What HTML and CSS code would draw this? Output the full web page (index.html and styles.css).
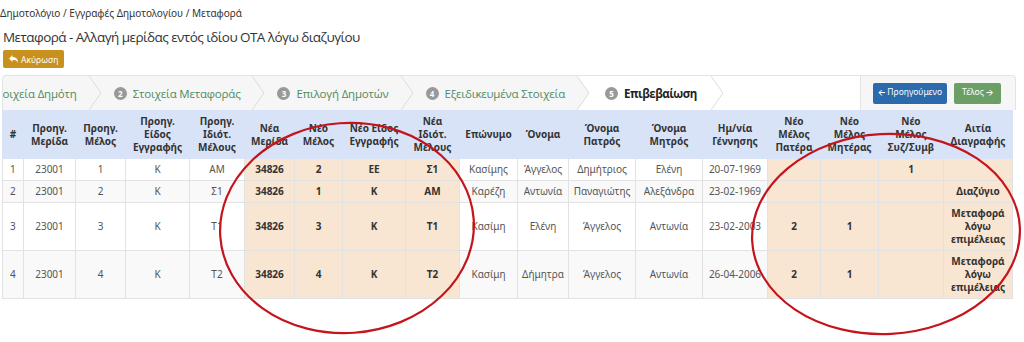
FILE: index.html
```html
<!DOCTYPE html>
<html lang="el">
<head>
<meta charset="UTF-8">
<meta name="viewport" content="width=device-width, initial-scale=1.0">
<title>Μεταφορά</title>
<link rel="stylesheet" href="styles.css">
</head>
<body>
  <div class="page">
    <div class="breadcrumb">Δημοτολόγιο / Εγγραφές Δημοτολογίου / Μεταφορά</div>
    <h1 class="title">Μεταφορά - Αλλαγή μερίδας εντός ιδίου ΟΤΑ λόγω διαζυγίου</h1>
    <button class="btn-cancel">
      <svg width="9" height="8" viewBox="0 0 9 8"><path d="M0 3.5 L3.5 0 V2 C7 2 9 4 9 8 C8 5.5 6.5 5 3.5 5 V7 Z" fill="#fff"/></svg>
      Ακύρωση
    </button>

    <div class="wizard">
      <div class="steps">
        <div class="step first"><span class="num">1</span>Στοιχεία Δημότη</div>
        <svg class="chev" width="12" height="34" viewBox="0 0 12 34"><polyline points="0,0 12,17 0,34" fill="none" stroke="#dcdcdc"/></svg>
        <div class="step"><span class="num">2</span>Στοιχεία Μεταφοράς</div>
        <svg class="chev" width="12" height="34" viewBox="0 0 12 34"><polyline points="0,0 12,17 0,34" fill="none" stroke="#dcdcdc"/></svg>
        <div class="step"><span class="num">3</span>Επιλογή Δημοτών</div>
        <svg class="chev" width="12" height="34" viewBox="0 0 12 34"><polyline points="0,0 12,17 0,34" fill="none" stroke="#dcdcdc"/></svg>
        <div class="step"><span class="num">4</span>Εξειδικευμένα Στοιχεία</div>
        <svg class="chev to-active" width="12" height="34" viewBox="0 0 12 34"><path d="M0 0 L12 17 L0 34 Z" fill="#f6f6f6"/><polyline points="0,0 12,17 0,34" fill="none" stroke="#dcdcdc"/></svg>
        <div class="step active"><span class="num">5</span>Επιβεβαίωση</div>
        <svg class="chev" width="12" height="34" viewBox="0 0 12 34"><polyline points="0,0 12,17 0,34" fill="none" stroke="#dcdcdc"/></svg>
        <div class="spacer"></div>
      </div>
      <div class="actions">
        <button class="btn btn-prev">&#129128; Προηγούμενο</button>
        <button class="btn btn-next">Τέλος &#129130;</button>
      </div>
    </div>

    <table class="grid">
      <colgroup>
        <col style="width:21px"><col style="width:52px"><col style="width:50px"><col style="width:64px">
        <col style="width:55px"><col style="width:50px"><col style="width:48px"><col style="width:63px">
        <col style="width:54px"><col style="width:58px"><col style="width:51px"><col style="width:67px">
        <col style="width:67px"><col style="width:65px"><col style="width:53px"><col style="width:58px">
        <col style="width:65px"><col style="width:69px">
      </colgroup>
      <thead>
        <tr>
          <th>#</th>
          <th>Προηγ.<br>Μερίδα</th>
          <th>Προηγ.<br>Μέλος</th>
          <th>Προηγ.<br>Είδος<br>Εγγραφής</th>
          <th>Προηγ.<br>Ιδιότ.<br>Μέλους</th>
          <th>Νέα<br>Μερίδα</th>
          <th>Νέο<br>Μέλος</th>
          <th>Νέο Είδος<br>Εγγραφής</th>
          <th>Νέα<br>Ιδιότ.<br>Μέλους</th>
          <th>Επώνυμο</th>
          <th>Όνομα</th>
          <th>Όνομα<br>Πατρός</th>
          <th>Όνομα<br>Μητρός</th>
          <th>Ημ/νία<br>Γέννησης</th>
          <th>Νέο<br>Μέλος<br>Πατέρα</th>
          <th>Νέο<br>Μέλος<br>Μητέρας</th>
          <th>Νέο<br>Μέλος<br>Συζ/Συμβ</th>
          <th>Αιτία<br>Διαγραφής</th>
        </tr>
      </thead>
      <tbody>
        <tr>
          <td class="idx">1</td><td>23001</td><td>1</td><td>Κ</td><td>ΑΜ</td>
          <td class="new">34826</td><td class="new">2</td><td class="new">ΕΕ</td><td class="new">Σ1</td>
          <td>Κασίμης</td><td>Άγγελος</td><td>Δημήτριος</td><td>Ελένη</td><td>20-07-1969</td>
          <td class="new"></td><td class="new"></td><td class="new">1</td><td class="new"></td>
        </tr>
        <tr>
          <td class="idx">2</td><td>23001</td><td>2</td><td>Κ</td><td>Σ1</td>
          <td class="new">34826</td><td class="new">1</td><td class="new">Κ</td><td class="new">ΑΜ</td>
          <td>Καρέζη</td><td>Αντωνία</td><td>Παναγιώτης</td><td>Αλεξάνδρα</td><td>23-02-1969</td>
          <td class="new"></td><td class="new"></td><td class="new"></td><td class="new">Διαζύγιο</td>
        </tr>
        <tr class="tall">
          <td class="idx">3</td><td>23001</td><td>3</td><td>Κ</td><td>Τ1</td>
          <td class="new">34826</td><td class="new">3</td><td class="new">Κ</td><td class="new">Τ1</td>
          <td>Κασίμη</td><td>Ελένη</td><td>Άγγελος</td><td>Αντωνία</td><td>23-02-2003</td>
          <td class="new">2</td><td class="new">1</td><td class="new"></td><td class="new">Μεταφορά<br>λόγω<br>επιμέλειας</td>
        </tr>
        <tr class="tall">
          <td class="idx">4</td><td>23001</td><td>4</td><td>Κ</td><td>Τ2</td>
          <td class="new">34826</td><td class="new">4</td><td class="new">Κ</td><td class="new">Τ2</td>
          <td>Κασίμη</td><td>Δήμητρα</td><td>Άγγελος</td><td>Αντωνία</td><td>26-04-2006</td>
          <td class="new">2</td><td class="new">1</td><td class="new"></td><td class="new">Μεταφορά<br>λόγω<br>επιμέλειας</td>
        </tr>
      </tbody>
    </table>

    <!-- hand-drawn marks over the screenshot -->
    <svg class="marks" width="1024" height="342" viewBox="0 0 1024 342">
      <ellipse cx="347" cy="228" rx="127" ry="105" fill="none" stroke="#c4141c" stroke-width="2.2" transform="rotate(-4 347 228)"/>
      <ellipse cx="886" cy="234" rx="134" ry="100" fill="none" stroke="#c4141c" stroke-width="2.2" transform="rotate(-3 886 234)"/>
    </svg>
  </div>
</body>
</html>
```

FILE: styles.css
```css
body {
  margin: 0;
  font-family: "Noto Sans", "Open Sans", sans-serif;
  color: #333;
  background: #fff;
}
.page {
  position: relative;
  width: 1024px;
  height: 342px;
  overflow: hidden;
}
.breadcrumb {
  font-size: 10px;
  line-height: 14px;
  padding: 6px 0 0 0;
  color: #333;
}
.title {
  font-family: "Open Sans", sans-serif;
  font-weight: normal;
  font-size: 13.5px;
  letter-spacing: -0.55px;
  line-height: 20px;
  margin: 7px 0 0 3px;
  color: #333;
}
.btn-cancel {
  display: flex;
  align-items: center;
  gap: 3px;
  margin: 3px 0 0 3px;
  height: 18px;
  padding: 0 6px;
  border: none;
  border-radius: 2px;
  background: #c8901d;
  color: #fff;
  font-family: "Noto Sans", sans-serif;
  font-size: 8.5px;
}
.wizard {
  display: flex;
  margin: 7px 0 0 2px;
  width: 1012px;
  height: 34px;
  border: 1px solid #e4e4e4;
  border-bottom: none;
  border-radius: 4px 4px 0 0;
  overflow: hidden;
  background: #f6f6f6;
}
.steps {
  flex: 1;
  display: flex;
  align-items: center;
  height: 34px;
}
.step {
  display: flex;
  align-items: center;
  height: 34px;
  padding: 0 12px 0 13px;
  font-family: "Open Sans", sans-serif;
  font-size: 11.5px;
  letter-spacing: -0.2px;
  color: #4f8a62;
  white-space: nowrap;
}
.step.first {
  margin-left: -44px;
}
.step.active {
  background: #fff;
  color: #222;
  font-weight: bold;
  letter-spacing: -0.5px;
  padding-left: 16px;
  padding-right: 14px;
}
.num {
  display: inline-flex;
  align-items: center;
  justify-content: center;
  width: 13px;
  height: 13px;
  margin-right: 6px;
  border-radius: 50%;
  background: #999;
  color: #fff;
  font-size: 8px;
  font-weight: bold;
  letter-spacing: 0;
}
.chev {
  flex: none;
  display: block;
  background: #f6f6f6;
}
.chev.to-active {
  background: #fff;
}
.step.active + .chev {
  background: #fff;
}
.spacer {
  flex: 1;
  height: 34px;
  background: #fff;
}
.actions {
  display: flex;
  align-items: center;
  gap: 7px;
  padding: 0 14px 0 12px;
  border-left: 1px solid #e4e4e4;
}
.btn {
  height: 21px;
  border: none;
  border-radius: 2px;
  color: #fff;
  font-family: "Noto Sans", sans-serif;
  font-size: 8.5px;
  padding: 0 5px;
}
.btn-prev {
  background: #2b6aac;
}
.btn-next {
  background: #6b9f66;
  padding: 0 8px;
}
.grid {
  margin-left: 2px;
  width: 1010px;
  table-layout: fixed;
  border-collapse: collapse;
  font-size: 10px;
}
.grid th,
.grid td {
  border: 1px solid #e2e2e2;
  padding: 4px 2px;
  line-height: 13px;
  text-align: center;
  vertical-align: middle;
}
.grid th {
  background: #d8e3f7;
  color: #333;
  font-weight: bold;
  border-color: #d8e3f7;
  height: 39px;
}
.grid td {
  color: #555;
}
.grid td.idx {
  text-align: left;
  padding-left: 7px;
}
.grid tbody tr:nth-child(even) td {
  background: #f9f9f9;
}
.grid td.new,
.grid tbody tr:nth-child(even) td.new {
  background: #f9e6d2;
  color: #333;
  font-weight: bold;
}
.grid tr.tall td {
  height: 38px;
}
.marks {
  position: absolute;
  left: 0;
  top: 0;
  pointer-events: none;
}
```
